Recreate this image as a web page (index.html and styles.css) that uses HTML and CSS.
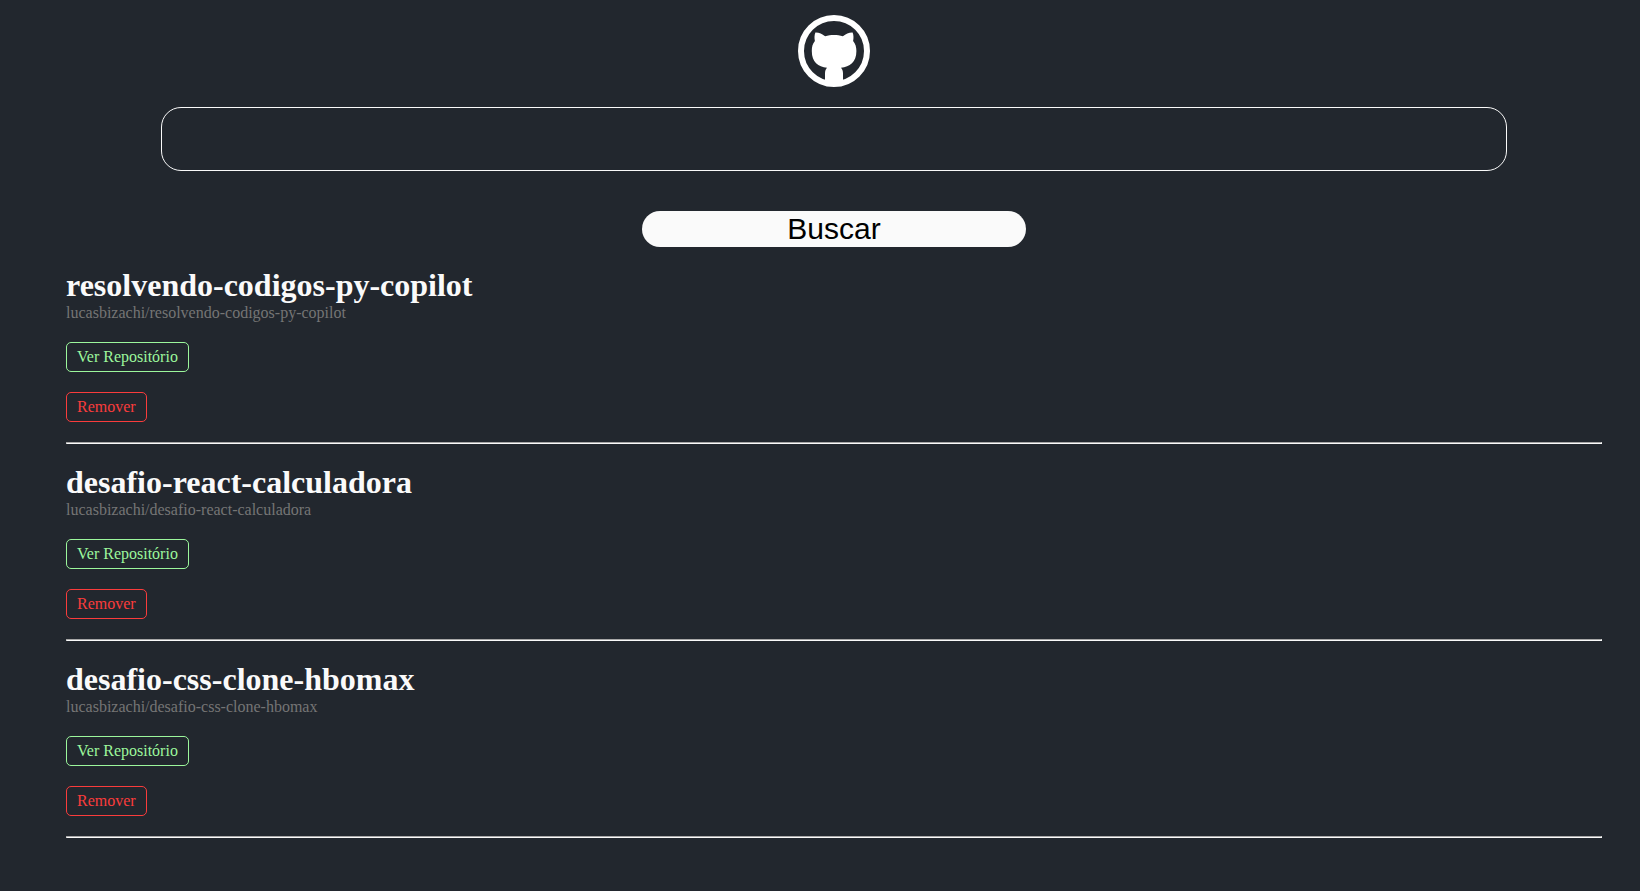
FILE: index.html
```html
<!DOCTYPE html>
<html lang="pt-BR">
<head>
  <meta charset="utf-8">
  <meta name="viewport" content="width=device-width, initial-scale=1">
  <title>Repositórios GitHub</title>
  <link rel="stylesheet" href="styles.css">
</head>
<body>
  <main class="container">
    <svg class="logo" viewBox="0 0 72 72" role="img" aria-label="GitHub">
      <circle class="logo-ring" cx="36" cy="36" r="33"/>
      <path class="logo-cat" d="M17.4 17.6 C20.8 17.4 24.1 19.1 27.1 21.2 C30 20.3 33 20 36 20 C39 20 42 20.3 44.9 21.2 C47.9 19.1 51.2 17.4 54.6 17.6 C55.7 20.3 55.7 23.2 55.1 26 C57.5 28.8 58.4 32 58.4 36 C58.4 47.5 51.8 51.6 43 52.8 C44.4 54.4 45 56.2 45 58.4 V66 C39 68 33 68 27 66 V58.4 C27 56.2 27.6 54.4 29 52.8 C20.2 51.6 13.8 47.5 13.8 36 C13.8 32 14.5 28.8 16.9 26 C16.3 23.2 16.3 20.3 17.4 17.6 Z"/>
    </svg>

    <form class="search">
      <input class="search-input" type="text" name="repo" aria-label="Repositório">
      <button class="search-button" type="button">Buscar</button>
    </form>

    <section class="repo">
      <h1 class="repo-name">resolvendo-codigos-py-copilot</h1>
      <p class="repo-path">lucasbizachi/resolvendo-codigos-py-copilot</p>
      <a class="action action-view" href="https://github.com/lucasbizachi/resolvendo-codigos-py-copilot">Ver Repositório</a>
      <button class="action action-remove" type="button">Remover</button>
      <hr class="divider">
    </section>

    <section class="repo">
      <h1 class="repo-name">desafio-react-calculadora</h1>
      <p class="repo-path">lucasbizachi/desafio-react-calculadora</p>
      <a class="action action-view" href="https://github.com/lucasbizachi/desafio-react-calculadora">Ver Repositório</a>
      <button class="action action-remove" type="button">Remover</button>
      <hr class="divider">
    </section>

    <section class="repo">
      <h1 class="repo-name">desafio-css-clone-hbomax</h1>
      <p class="repo-path">lucasbizachi/desafio-css-clone-hbomax</p>
      <a class="action action-view" href="https://github.com/lucasbizachi/desafio-css-clone-hbomax">Ver Repositório</a>
      <button class="action action-remove" type="button">Remover</button>
      <hr class="divider">
    </section>
  </main>
</body>
</html>
```

FILE: styles.css
```css
* {
  margin: 0;
  padding: 0;
}

body {
  background: #22272e;
  color: #fafafa;
  font-family: "Liberation Serif", "Times New Roman", serif;
  font-size: 16px;
  line-height: 18px;
}

.container {
  display: flex;
  flex-direction: column;
  align-items: center;
  gap: 20px;
  padding: 15px 38px 20px 66px;
}

.logo {
  width: 72px;
  height: 72px;
}

.logo-ring {
  fill: none;
  stroke: #fff;
  stroke-width: 6;
}

.logo-cat {
  fill: #fff;
}

.search {
  display: flex;
  flex-direction: column;
  align-items: center;
  gap: 40px;
  width: 100%;
}

.search-input {
  width: 87.5%;
  height: 62px;
  border: 1px solid #fafafa;
  border-radius: 20px;
  background: transparent;
  color: #fafafa;
  font-family: "Liberation Sans", Arial, sans-serif;
  font-size: 20px;
  text-indent: 20px;
}

.search-button {
  width: 25%;
  padding: 1px 6px;
  border: 0;
  border-radius: 20px;
  background: #fafafa;
  color: #000;
  font-family: "Liberation Sans", Arial, sans-serif;
  font-size: 30px;
  line-height: 34px;
  cursor: pointer;
}

.repo {
  display: flex;
  flex-direction: column;
  align-items: flex-start;
  gap: 20px;
  width: 100%;
}

.repo-name {
  margin-bottom: -20px;
  font-size: 32px;
  line-height: 37px;
}

.repo-path {
  color: #757575;
}

.action {
  padding: 5px 10px;
  border: 1px solid currentColor;
  border-radius: 5px;
  background: transparent;
  font: inherit;
  text-decoration: none;
  cursor: pointer;
}

.action-view {
  color: #9cf79c;
}

.action-remove {
  color: #fa3c3c;
}

.divider {
  width: 100%;
  box-sizing: border-box;
  border: 1px inset #fafafa;
}
```
